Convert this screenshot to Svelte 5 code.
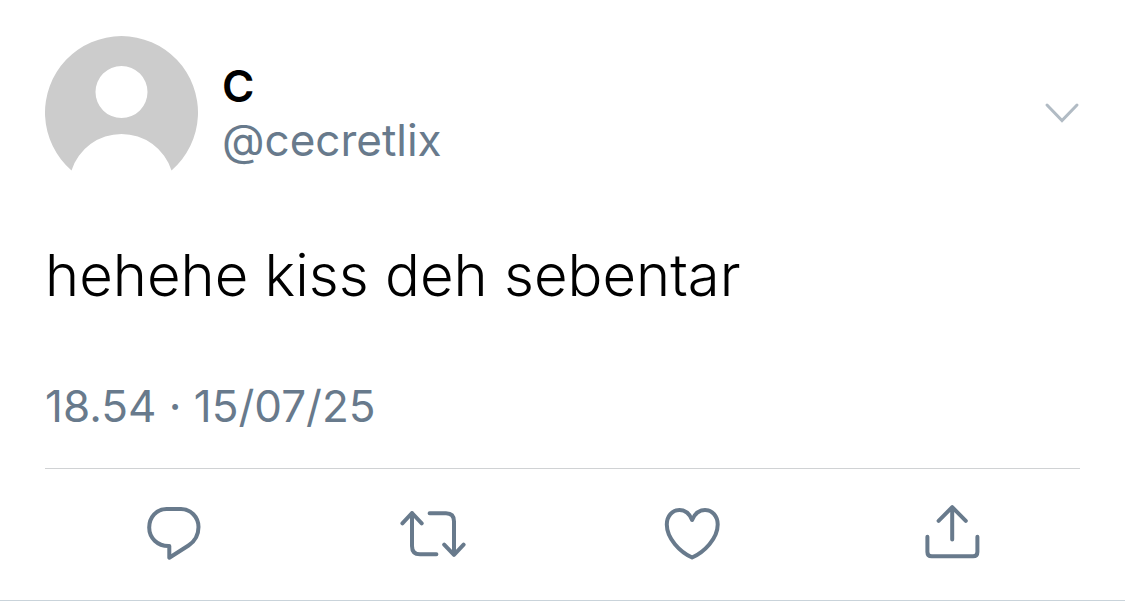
<script lang="ts">
    type Action = { label: string; paths: string[] };

    const tweet = {
        name: "C",
        handle: "@cecretlix",
        text: "hehehe kiss deh sebentar",
        time: "18.54 · 15/07/25",
    };

    const actions: Action[] = [
        {
            label: "Reply",
            paths: [
                "M25.5 6H40C49.5 6 57.5 14 57.5 24C57.5 32 53.5 38.5 47.5 42.5L28.3 54.7V43H27.5C16.5 43 8.2 35 8.2 24.5C8.2 14 15.5 6 25.5 6Z",
            ],
        },
        {
            label: "Retweet",
            paths: [
                "M2.4 20.3L12 10L21.7 20.3M12 10V43C12 48.5 15 51.3 20 51.3H36.4",
                "M29.6 10.3H46C51 10.3 54 13 54 18.5V51.6M44.2 41.6L54 51.8L63.6 41.6",
            ],
        },
        {
            label: "Like",
            paths: [
                "M33.1 17C30.5 10.5 26 7 20.5 7C13.2 7 7.8 13 7.8 21.5C7.8 35.5 21 49 33.1 54.5C45.3 49 58.7 35.5 58.7 21.5C58.7 13 53.2 7 46 7C40.3 7 35.8 10.5 33.1 17Z",
            ],
        },
        {
            label: "Share",
            paths: [
                "M20.6 17.8L34.2 4.2L47.8 17.8M34.2 4.2V36.6",
                "M9.4 33.7V49C9.4 51.8 11 53.3 13.7 53.3H55.1C57.8 53.3 59.4 51.8 59.4 49V33.7",
            ],
        },
    ];
</script>

<article class="tweet">
    <header class="author">
        <svg class="avatar" viewBox="0 0 153 135" aria-hidden="true">
            <path
                fill="#ccc"
                fill-rule="evenodd"
                d="M26.5 134.5A76.5 76.5 0 1 1 126.5 134.5A52.5 52.5 0 0 0 26.5 134.5ZM76.5 30A26 26 0 1 0 76.5 82A26 26 0 1 0 76.5 30Z"
            />
        </svg>
        <div class="names">
            <strong class="name">{tweet.name}</strong>
            <a class="handle" href="#profile">{tweet.handle}</a>
        </div>
        <button class="more" type="button" aria-label="More">
            <svg viewBox="0 0 36 22" aria-hidden="true">
                <path d="M3 3L18 18.5L33 3" />
            </svg>
        </button>
    </header>

    <p class="text">{tweet.text}</p>
    <time class="time">{tweet.time}</time>

    <div class="actions">
        {#each actions as action}
            <button type="button" aria-label={action.label}>
                <svg viewBox="0 0 66 60" aria-hidden="true">
                    {#each action.paths as d}
                        <path {d} />
                    {/each}
                </svg>
            </button>
        {/each}
    </div>
</article>

<style>
    :global(body) {
        margin: 0;
        background: #fff;
    }

    .tweet {
        padding: 36px 45px 37px;
        border-bottom: 1px solid #c9d3da;
        color: #000;
        font-family: Inter, "Liberation Sans", sans-serif;
        font-size: 44px;
        line-height: 54px;
    }

    .author {
        display: flex;
        align-items: flex-start;
    }

    .avatar {
        width: 153px;
        height: 135px;
        flex: none;
    }

    .names {
        display: flex;
        flex-direction: column;
        flex: 1;
        min-width: 0;
        padding: 23px 0 0 24px;
    }

    .name {
        font-weight: 600;
    }

    .handle {
        color: #687a8c;
        text-decoration: none;
    }

    button {
        padding: 0;
        border: 0;
        background: none;
        cursor: pointer;
    }

    button svg {
        display: block;
        fill: none;
        stroke: #687a8c;
        stroke-width: 4;
        stroke-linecap: round;
        stroke-linejoin: round;
    }

    .more {
        margin-top: 66px;
    }

    .more svg {
        width: 36px;
        height: 22px;
        stroke: #b1bbc4;
        stroke-width: 3;
        stroke-linejoin: miter;
    }

    .text {
        margin: 68px 0 0;
        font-size: 58px;
        font-weight: 300;
        line-height: 72px;
    }

    .time {
        display: block;
        margin-top: 68px;
        color: #687a8c;
    }

    .actions {
        display: flex;
        margin-top: 35px;
        padding-top: 34px;
        border-top: 1px solid #d0d2d4;
    }

    .actions button {
        display: flex;
        flex: 1;
        justify-content: center;
    }

    .actions svg {
        width: 66px;
        height: 60px;
    }
</style>
